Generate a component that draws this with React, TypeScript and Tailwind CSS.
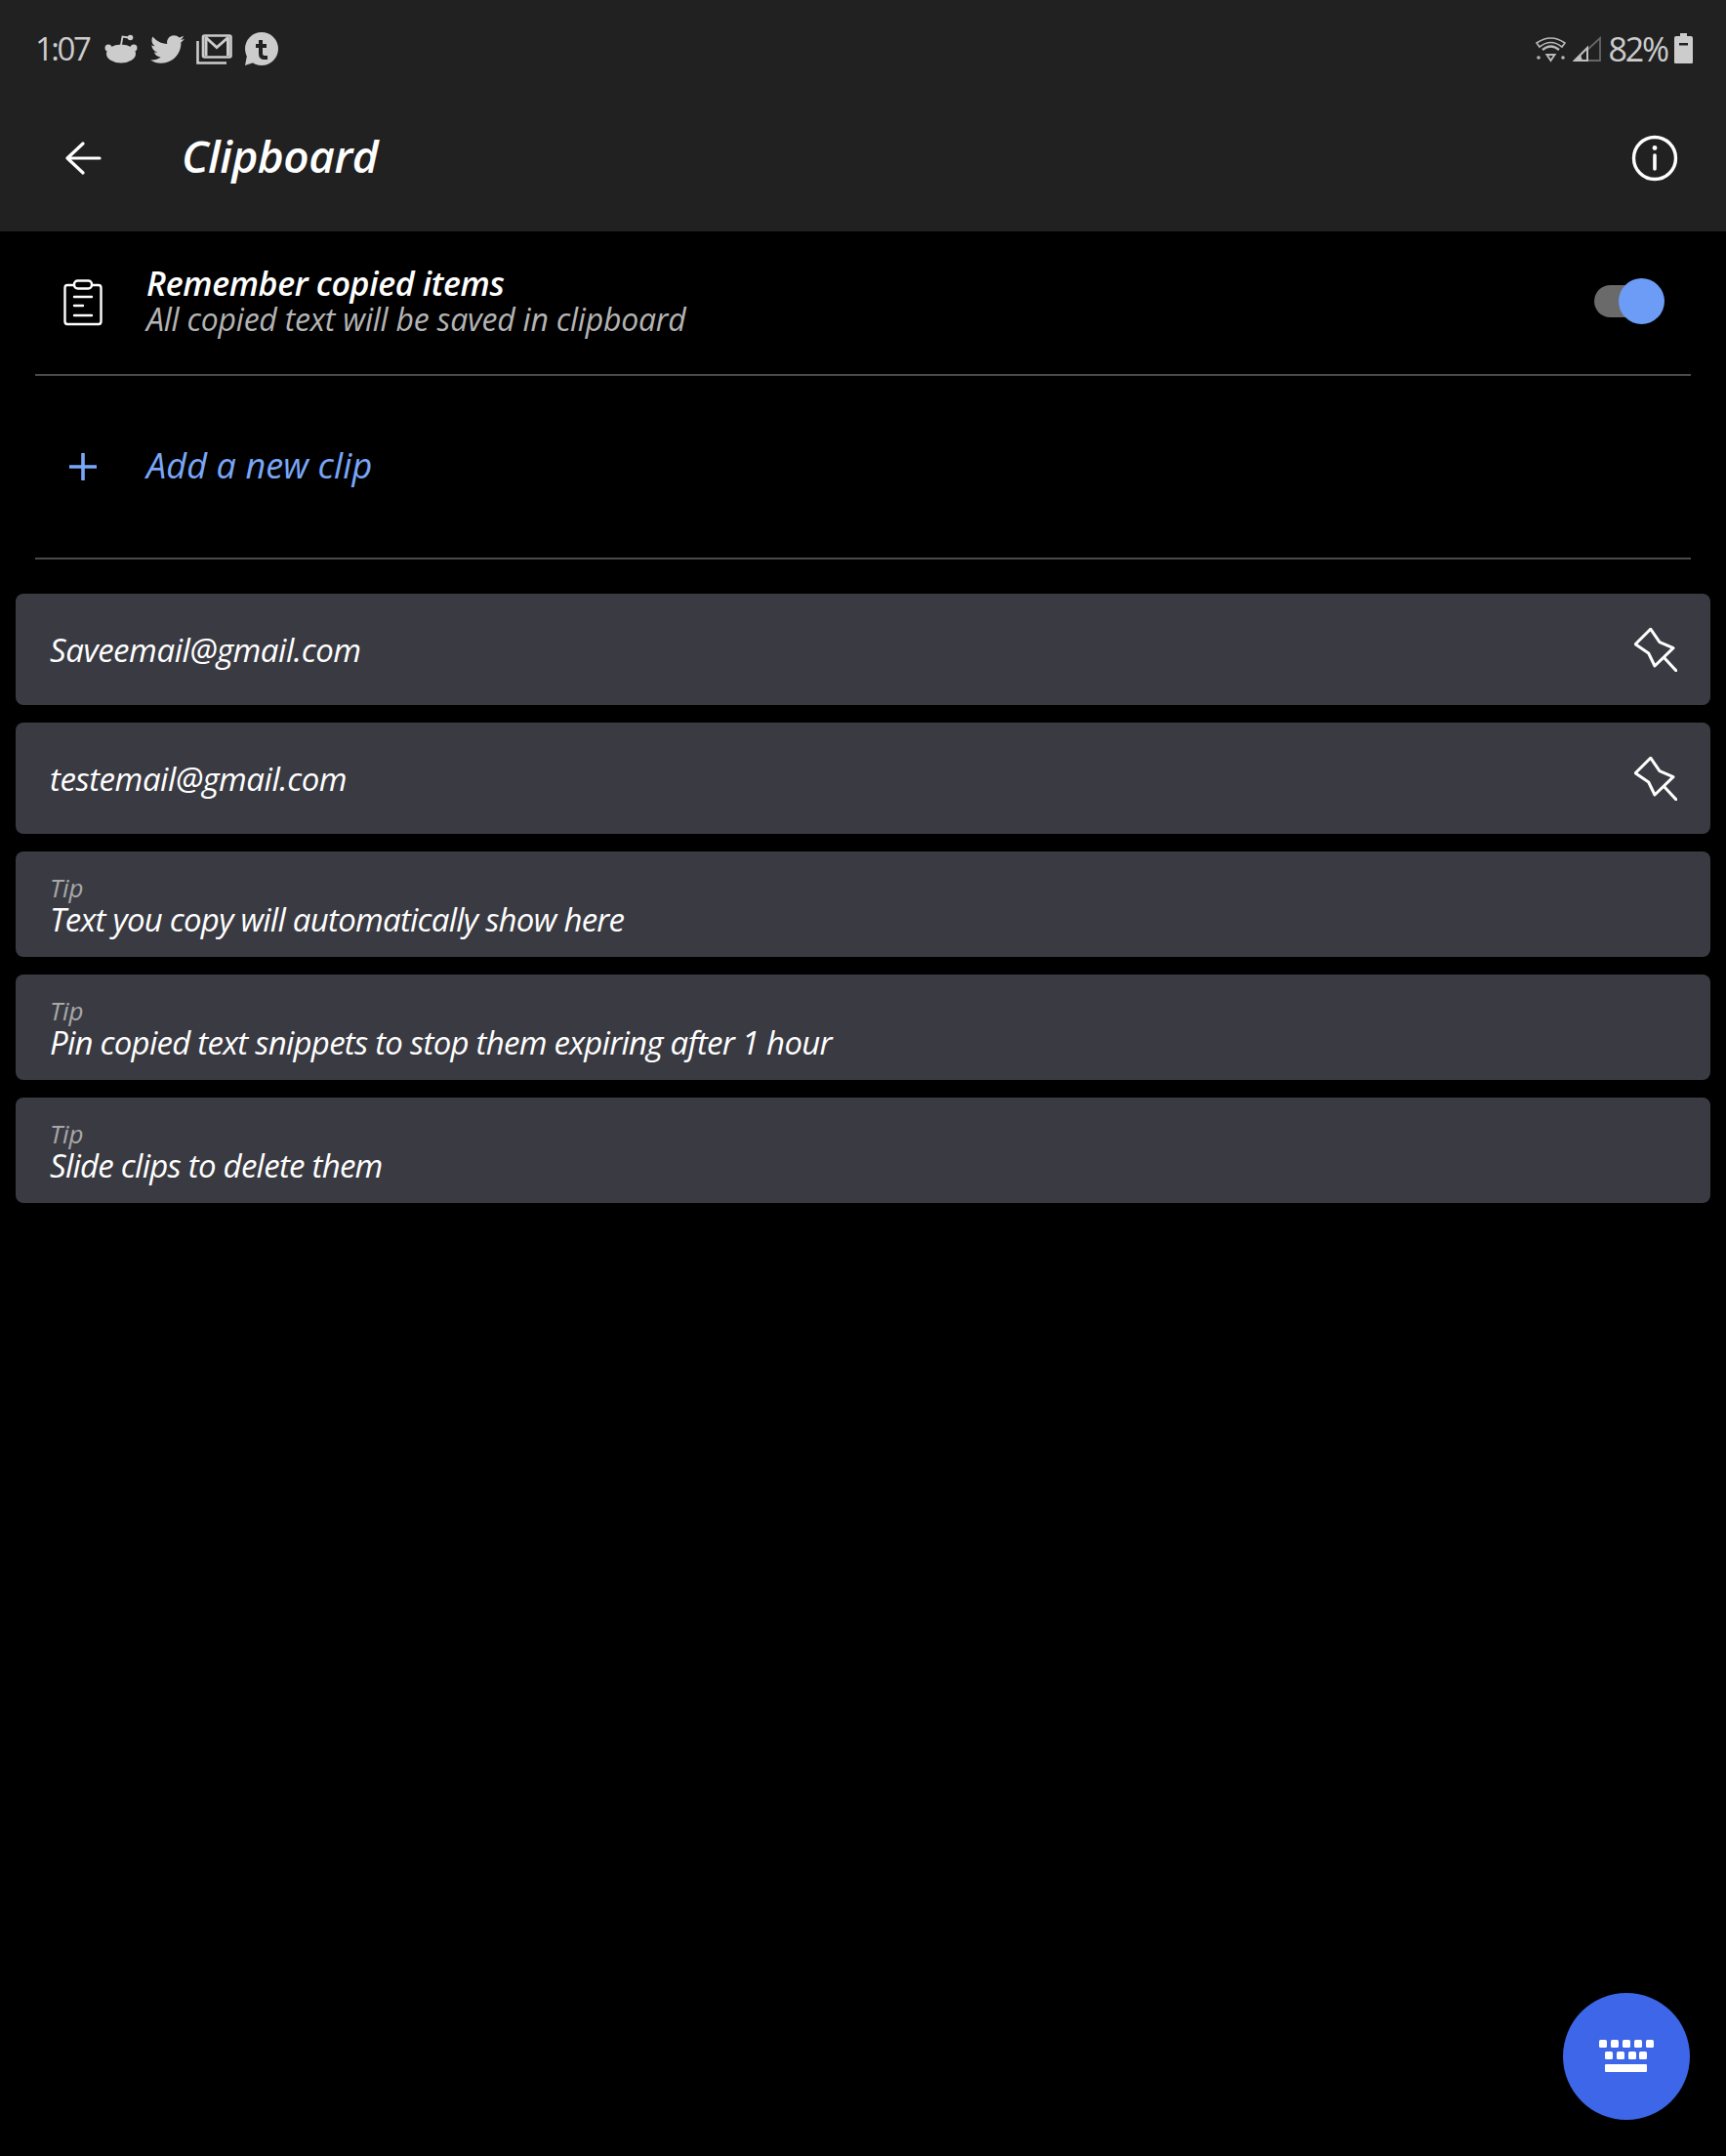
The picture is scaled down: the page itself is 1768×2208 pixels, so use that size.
import { FaTwitter } from "react-icons/fa";

const font = "font-['Open_Sans',sans-serif]";

function RedditIcon() {
  return (
    <svg width="34" height="30" viewBox="0 0 34 30" fill="#cccccc">
      <ellipse cx="17" cy="20" rx="15" ry="9.5" />
      <circle cx="4" cy="14" r="3.5" />
      <circle cx="30" cy="14" r="3.5" />
      <path d="M17 11 L18.5 2.5 L25 3.5" fill="none" stroke="#cccccc" strokeWidth="1.8" />
      <circle cx="26.5" cy="3.5" r="2.8" />
    </svg>
  );
}

function GmailIcon() {
  return (
    <svg width="37" height="31" viewBox="0 0 37 31" fill="none" stroke="#cccccc">
      <path d="M1.5 7 V29.5 H31" strokeWidth="2.6" />
      <rect x="7" y="1.5" width="28.5" height="22" rx="1.5" strokeWidth="2.6" />
      <path d="M10 3 V22 M32.5 3 V22" strokeWidth="3" />
      <path d="M9.5 3 L21 13.5 L33 3" strokeWidth="2.8" />
    </svg>
  );
}

function TumblrIcon() {
  return (
    <svg width="35" height="35" viewBox="0 0 35 35">
      <circle cx="18" cy="17" r="17" fill="#cccccc" />
      <path d="M1 34 L3 24 L10 31 Z" fill="#cccccc" />
      <path d="M17 8 V22 Q17 26 21 26 H24 M12 14 H23" fill="none" stroke="#212121" strokeWidth="4" />
    </svg>
  );
}

function WifiIcon() {
  return (
    <svg width="31" height="28" viewBox="0 0 31 28" fill="none" stroke="#b8b8b8">
      <path d="M1 8 Q15.5 -2 30 8 L27 12 Q15.5 3 4 12 Z" strokeWidth="1.6" />
      <path d="M7 15 Q15.5 8 24 15" strokeWidth="2.4" />
      <path d="M11.5 20 H19.5 L15.5 26 Z" strokeWidth="2" />
      <circle cx="3" cy="23" r="1.8" fill="#b8b8b8" stroke="none" />
      <circle cx="28" cy="23" r="1.8" fill="#b8b8b8" stroke="none" />
    </svg>
  );
}

function SignalIcon() {
  return (
    <svg width="30" height="27" viewBox="0 0 30 27" fill="none">
      <path d="M28 2 V25 H15 V14 Z" stroke="#666666" strokeWidth="1.8" />
      <path d="M15 12 V25 H2 Z" stroke="#c0c0c0" strokeWidth="2" />
      <path d="M8 19 L2 25 H10" fill="#c0c0c0" />
    </svg>
  );
}

function BatteryIcon() {
  return (
    <svg width="20" height="32" viewBox="0 0 20 32" fill="#cccccc">
      <path d="M6 0 H13 V3 H17 Q19 3 19 5 V30 Q19 31 18 31 H1 Q0 31 0 30 V5 Q0 3 2 3 H6 Z" />
      <rect x="5" y="10" width="9" height="2.5" fill="#212121" />
    </svg>
  );
}

function PinIcon() {
  return (
    <svg width="44" height="45" viewBox="0 0 44 45" fill="none" stroke="#ffffff" strokeWidth="3" strokeLinejoin="round" strokeLinecap="round">
      <path d="M16.7 1.2 L1.2 16.7 L14.7 26 L21 39 L40 20.7 L26 14.7 Z" />
      <path d="M31 31 L43 44" />
    </svg>
  );
}

function ClipCard({ text }: { text: string }) {
  return (
    <div className="flex h-[114px] items-center justify-between rounded-lg bg-[#3a3a42] pl-[35px] pr-[34px]">
      <span className="text-[33px] font-medium italic leading-none tracking-[-0.45px] text-white">{text}</span>
      <PinIcon />
    </div>
  );
}

function TipCard({ text }: { text: string }) {
  return (
    <div className="flex h-[108px] flex-col justify-center rounded-lg bg-[#3a3a42] px-[35px] pt-[2px]">
      <span className="text-[26px] italic leading-[30px] text-[#a8a8a8]">Tip</span>
      <span className="text-[33px] font-medium italic leading-[36px] tracking-[-0.75px] text-white">{text}</span>
    </div>
  );
}

export default function App() {
  return (
    <div className={`relative h-[2208px] w-[1768px] overflow-hidden bg-black ${font}`}>
      <header className="h-[237px] bg-[#212121]">
        <div className="flex h-[100px] items-center justify-between pl-[36px] pr-[33px]">
          <div className="flex items-center">
            <span className="mr-[16px] text-[33px] font-medium tracking-[-2.5px] text-[#cccccc]">1:07</span>
            <RedditIcon />
            <FaTwitter className="ml-[13px] mr-[12px] text-[35px] text-[#cccccc]" />
            <GmailIcon />
            <div className="ml-[12px]">
              <TumblrIcon />
            </div>
          </div>
          <div className="flex items-center gap-[7px]">
            <WifiIcon />
            <SignalIcon />
            <span className="text-[34px] font-medium tracking-[-2.2px] text-[#cccccc]">82%</span>
            <BatteryIcon />
          </div>
        </div>
        <div className="flex h-[124px] items-center justify-between pl-[67px] pr-[49px]">
          <div className="flex items-center">
            <svg width="37" height="34" viewBox="0 0 37 34" fill="none" stroke="#ffffff" strokeWidth="3.2" strokeLinecap="round" strokeLinejoin="round">
              <path d="M18 2 L2 17 L18 32 M2 17 H35" />
            </svg>
            <h1 className="mb-[6px] ml-[82px] text-[46px] font-semibold italic leading-none tracking-[-0.5px] text-white">Clipboard</h1>
          </div>
          <svg width="48" height="48" viewBox="0 0 48 48" fill="none" stroke="#ffffff" strokeLinecap="round">
            <circle cx="24" cy="24" r="21.5" strokeWidth="3.4" />
            <path d="M24 21 V35" strokeWidth="3.6" />
            <circle cx="24" cy="13.5" r="2.4" fill="#ffffff" stroke="none" />
          </svg>
        </div>
      </header>

      <div className="mx-[36px]">
        <div className="flex h-[148px] items-center border-b-2 border-[#4a4a4a] pb-[3px]">
          <div className="w-[114px] pl-[29px] pt-[2px]">
            <svg width="40" height="48" viewBox="0 0 40 48" fill="none" stroke="#ffffff" strokeWidth="2.4" strokeLinecap="round" strokeLinejoin="round">
              <path d="M11 6 H4 Q1.5 6 1.5 9 V43 Q1.5 46 4 46 H36 Q38.5 46 38.5 43 V9 Q38.5 6 36 6 H29" />
              <rect x="11" y="1.5" width="18" height="8" rx="3.5" />
              <path d="M11 18 H29 M11 27 H20 M11 37 H29" />
            </svg>
          </div>
          <div className="flex flex-1 flex-col">
            <span className="text-[34px] font-semibold italic leading-[37px] tracking-[-0.35px] text-white">Remember copied items</span>
            <span className="text-[32px] font-medium italic leading-[36px] tracking-[-0.23px] text-[#b4b4b4]">All copied text will be saved in clipboard</span>
          </div>
          <div className="relative mr-[39px] h-[33px] w-[60px] rounded-full bg-[#6a6a6a]">
            <div className="absolute right-[-12px] top-[-7px] h-[47px] w-[47px] rounded-full bg-[#6c9cf5]" />
          </div>
        </div>
        <div className="flex h-[188px] items-center border-b-2 border-[#4a4a4a] pb-[2px]">
          <div className="w-[114px] pl-[34px] pt-[2px]">
            <svg width="30" height="30" viewBox="0 0 30 30" fill="none" stroke="#7aa7f7" strokeWidth="3.6">
              <path d="M15 1 V29 M1 15 H29" />
            </svg>
          </div>
          <span className="text-[36px] font-medium italic leading-none tracking-[0.1px] text-[#7aa7f7]">Add a new clip</span>
        </div>
      </div>

      <div className="mt-[35px] flex flex-col gap-[18px] px-[16px]">
        <ClipCard text="Saveemail@gmail.com" />
        <ClipCard text="testemail@gmail.com" />
        <TipCard text="Text you copy will automatically show here" />
        <TipCard text="Pin copied text snippets to stop them expiring after 1 hour" />
        <TipCard text="Slide clips to delete them" />
      </div>

      <button className="absolute left-[1601px] top-[2041px] flex h-[130px] w-[130px] items-center justify-center rounded-full bg-[#3d66e8]">
        <svg width="56" height="34" viewBox="0 0 56 34" fill="#ffffff">
          <rect x="0" y="0" width="8" height="8" rx="1.5" />
          <rect x="12" y="0" width="8" height="8" rx="1.5" />
          <rect x="24" y="0" width="8" height="8" rx="1.5" />
          <rect x="36" y="0" width="8" height="8" rx="1.5" />
          <rect x="48" y="0" width="8" height="8" rx="1.5" />
          <rect x="6" y="12" width="8" height="8" rx="1.5" />
          <rect x="18" y="12" width="8" height="8" rx="1.5" />
          <rect x="30" y="12" width="8" height="8" rx="1.5" />
          <rect x="41" y="12" width="8" height="8" rx="1.5" />
          <rect x="6" y="25" width="43" height="8" rx="1" />
        </svg>
      </button>
    </div>
  );
}
